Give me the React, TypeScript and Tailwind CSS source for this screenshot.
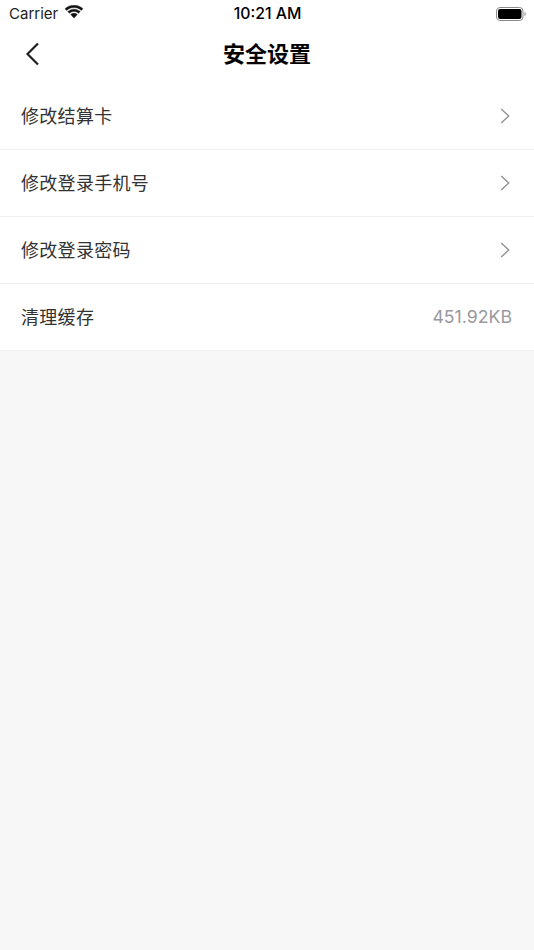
const rows = [
  { label: '修改结算卡' },
  { label: '修改登录手机号' },
  { label: '修改登录密码' },
  { label: '清理缓存', value: '451.92KB' },
];

function Chevron() {
  return (
    <svg width="10" height="16" viewBox="0 0 10 16" fill="none" stroke="#8e8e93" strokeWidth="1.300" className="mr-[2px]">
      <path d="M1.200 1 L8.800 8 L1.200 15" />
    </svg>
  );
}

export default function App() {
  return (
    <div className="flex flex-col w-[534px] h-[950px] bg-[#f7f7f7] overflow-hidden font-['Inter','Noto_Sans_CJK_SC',sans-serif]">
      {/* status bar */}
      <div className="flex items-center justify-between h-[27px] bg-white pl-[9px] pr-[8px] text-black">
        <div className="flex items-center gap-[6px] w-[120px]">
          <span className="text-[15px] leading-none text-[#222]">Carrier</span>
          <svg width="20" height="15" viewBox="0 0 19 14" fill="#111" stroke="#111" strokeWidth="0.400" className="-mt-[2px]">
            <path d="M9.500 2.200c2.700 0 5.100 1 7 2.800l1.500-1.600C15.700 1.300 12.800 0 9.500 0S3.300 1.300 1 3.400L2.500 5c1.900-1.800 4.300-2.800 7-2.800z" />
            <path d="M9.500 6c1.700 0 3.200.6 4.400 1.700l1.500-1.600C13.900 4.700 11.800 3.800 9.500 3.800S5.100 4.700 3.600 6.100l1.500 1.600C6.300 6.600 7.800 6 9.500 6z" />
            <path d="M9.500 7.700c-1.200 0-2.300.4-3.100 1.200l3.100 3.400 3.100-3.400c-.8-.8-1.900-1.200-3.100-1.200z" />
          </svg>
        </div>
        <span className="text-[15.800px] leading-none font-medium">10:21 AM</span>
        <div className="flex items-center justify-end w-[120px]">
          <svg width="30" height="14" viewBox="0 0 30 14" fill="none">
            <rect x="0.500" y="0.500" width="26.500" height="13" rx="3.500" stroke="#8a8a8a" />
            <rect x="2" y="2" width="23.500" height="10" rx="2.200" fill="#000" />
            <path d="M28.500 5v4c.7-.3 1.200-1.100 1.200-2s-.5-1.700-1.200-2z" fill="#8a8a8a" />
          </svg>
        </div>
      </div>

      {/* nav bar */}
      <div className="relative flex items-center justify-center h-[56px] bg-white">
        <button className="absolute left-[25px] top-[15px]">
          <svg width="15" height="24" viewBox="0 0 15 24" fill="none" stroke="#222" strokeWidth="2.200" className="block">
            <path d="M13 1.500 L2.500 12 L13 22.500" />
          </svg>
        </button>
        <h1 className="text-[22px] font-semibold text-black pb-[2px]">安全设置</h1>
      </div>

      {/* rows */}
      {rows.map((row) => (
        <div key={row.label} className="flex items-center justify-between h-[67px] bg-white border-b border-[#efefef] pl-[21px] pr-[22px]">
          <span className="text-[18px] tracking-[0.3px] text-[#333]">{row.label}</span>
          {row.value ? (
            <span className="text-[17.700px] text-[#99999d] pt-[1px]">{row.value}</span>
          ) : (
            <Chevron />
          )}
        </div>
      ))}
    </div>
  );
}
